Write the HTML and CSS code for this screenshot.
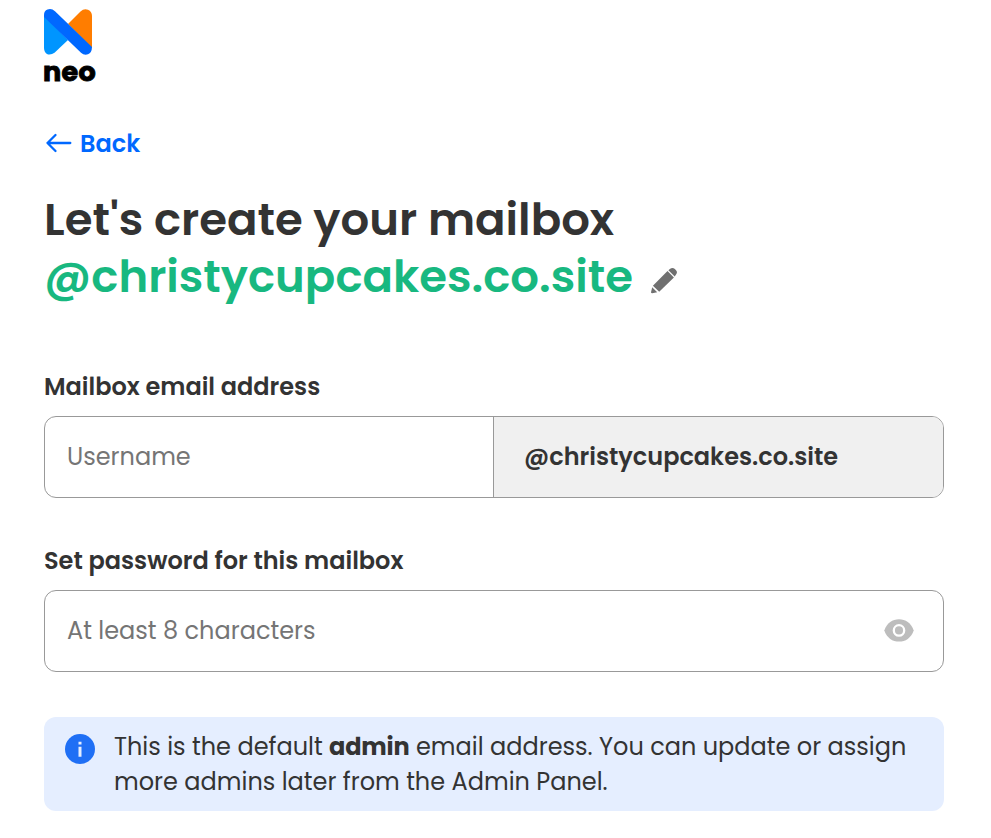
FILE: index.html
```html
<!DOCTYPE html>
<html lang="en">
<head>
<meta charset="utf-8">
<title>Create your mailbox</title>
<link rel="stylesheet" href="styles.css">
</head>
<body>
<main class="page">
  <header class="logo">
    <svg class="logo-mark" width="48" height="46" viewBox="0 0 48 46" aria-hidden="true">
      <path fill="#0095ff" d="M0 6L24 31L10.500 43.700Q7.500 46 4 45.400Q0 44 0 39Z"/>
      <path fill="#ff7d00" d="M24 15L36.500 2.500Q40 -.8 44 .8Q48 2.500 48 7V39Z"/>
      <path fill="#0068ff" d="M0 6Q0 1.800 3.500.5Q7.500-1 11 2.200L48 38Q47.800 44 44 45.300Q40 46.500 37 43.700L0 8Z"/>
    </svg>
    <span class="logo-name">neo</span>
  </header>
  <a class="back" href="#">
    <svg width="27" height="20" viewBox="0 0 27 20" fill="none" stroke="#0068ff" stroke-width="2.300" stroke-linecap="round" stroke-linejoin="round" aria-hidden="true"><path d="M25.300 10H2.500M10.500 2L2.500 10L10.500 18"/></svg>
    <span>Back</span>
  </a>
  <h1 class="title">
    <span class="title-row">Let's create your mailbox</span>
    <span class="title-row domain">@christycupcakes.co.site
      <svg class="pencil" width="26" height="26" viewBox="0 0 26 26" fill="#707070" aria-hidden="true"><path d="M1.200 19.300L6.200 24.300L1.200 25.300Q0 25.300 0 24.200ZM1.900 17.700L16.500 3.100L22.900 9.400L8.200 23.800ZM17.400 2.300L19.200.8Q21.500-.8 23.900 1.100L25 2.200Q26.800 4.200 25.200 6.300L23.700 8.400Z"/></svg>
    </span>
  </h1>
  <label class="label" for="user">Mailbox email address</label>
  <div class="field">
    <input class="input username" id="user" type="text" placeholder="Username">
    <span class="field-domain">@christycupcakes.co.site</span>
  </div>
  <label class="label second" for="pass">Set password for this mailbox</label>
  <div class="field password">
    <input class="input" id="pass" type="password" placeholder="At least 8 characters">
    <svg width="30" height="24" viewBox="0 0 30 24" aria-hidden="true"><path fill="#bdbdbd" d="M.3 11.400C3 4 8.500.3 15 .3S27 4 29.700 11.400C27 18.900 21.500 22.600 15 22.600S3 18.900 .3 11.400Z"/><circle cx="15" cy="11.400" r="5.200" fill="#bdbdbd" stroke="#fff" stroke-width="2.300"/></svg>
  </div>
  <aside class="notice">
    <svg width="30" height="30" viewBox="0 0 30 30" aria-hidden="true"><circle cx="15" cy="15" r="15" fill="#1f6ff5"/><path fill="#e5eeff" d="M13.500 7.700h3v2.900h-3zM13.500 12.800h3v10h-3z"/></svg>
    <p class="notice-text">This is the default <b>admin</b> email address. You can update or assign more admins later from the Admin Panel.</p>
  </aside>
</main>
</body>
</html>
```
FILE: styles.css
```css
* { box-sizing: border-box; }
body { margin: 0; background: #fff; color: #333; font: 24px/35px Poppins, Inter, sans-serif; }
.page { width: 900px; margin-left: 44px; padding-top: 9px; }
.logo { height: 76px; display: flex; flex-direction: column; }
.logo-mark { display: block; flex: none; }
.logo-name { margin-left: -1px; color: #000; font-size: 27px; font-weight: 700; line-height: 33px; letter-spacing: .3px; -webkit-text-stroke: .9px #000; }
.back { display: flex; align-items: center; gap: 8px; height: 36px; margin-top: 40px; padding-left: 1px; color: #0068ff; font-weight: 600; text-decoration: none; }
.title { margin: 30px 0 0; font-size: 45px; line-height: 57px; font-weight: 600; }
.title-row { display: flex; width: max-content; white-space: nowrap; }
.domain { align-items: center; gap: 18px; color: #18b880; }
.pencil { margin-top: 8px; }
.label { display: block; width: max-content; margin-top: 64px; font-weight: 600; line-height: 36px; }
.second { margin-top: 45px; }
.field { display: flex; height: 82px; margin-top: 11px; border: 1px solid #999; border-radius: 12px; overflow: hidden; }
.input { flex: 1; min-width: 0; padding: 0 0 2px 22px; border: 0; outline: 0; background: none; font: inherit; color: #333; }
.input::placeholder { color: #757575; }
.username { flex: 0 0 448px; }
.field-domain { display: flex; align-items: center; flex: 1; padding: 0 0 2px 30px; border-left: 1px solid #999; background: #f0f0f0; font-weight: 600; }
.password { align-items: center; padding-right: 29px; }
.notice { display: flex; gap: 19px; height: 94px; margin-top: 45px; padding: 12px 21px; border-radius: 12px; background: #e5eeff; }
.notice svg { flex: none; margin-top: 5px; }
.notice-text { margin: 0; }
.notice-text b { font-weight: 700; letter-spacing: -.15px; }
```
